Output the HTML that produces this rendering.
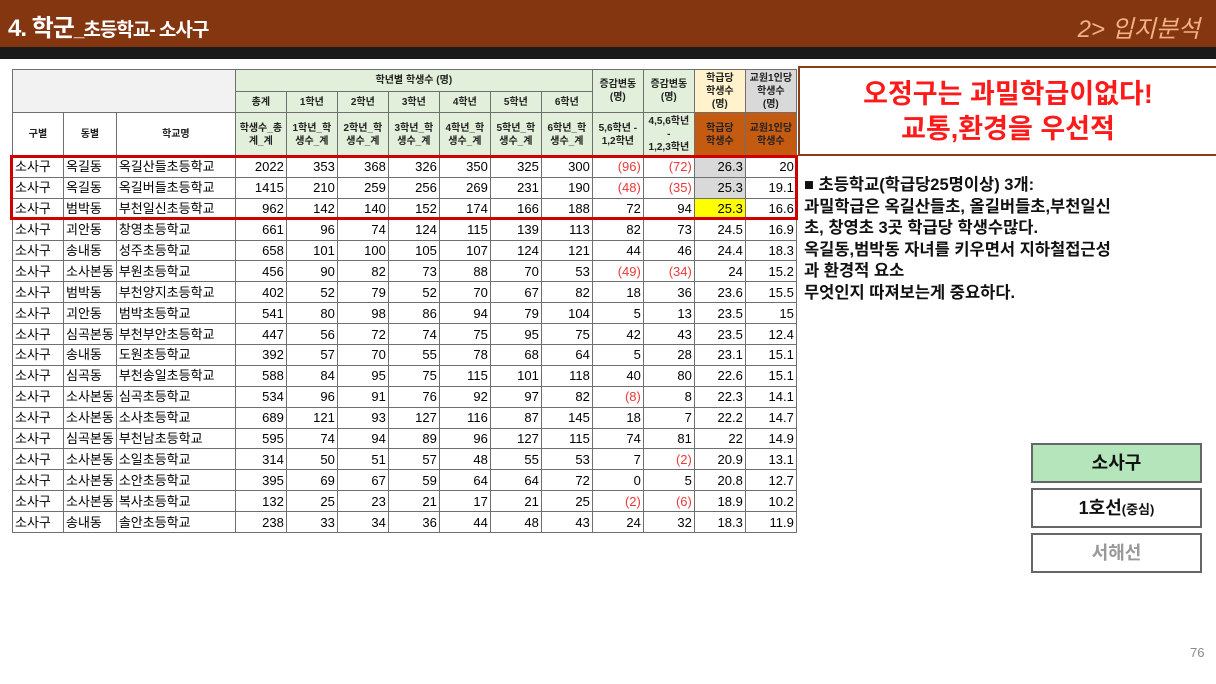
<!DOCTYPE html>
<html><head><meta charset="utf-8"><style>
*{margin:0;padding:0;box-sizing:border-box}
body{width:1216px;height:684px;background:#fff;position:relative;overflow:hidden;font-family:"Liberation Sans","Noto Sans CJK KR",sans-serif}
.hd{position:absolute;left:0;top:0;width:1216px;height:47px;background:#833610}
.bk{position:absolute;left:0;top:47px;width:1216px;height:12px;background:#1a1a1a}
.t1{position:absolute;left:8px;top:8px;color:#fff;font-weight:bold;font-size:24px;letter-spacing:-1px}
.t1 small{font-size:19px}
.t2{position:absolute;right:16px;top:9px;color:#f4b183;font-style:italic;font-size:24px}
table{position:absolute;left:12px;top:69px;border-collapse:collapse;table-layout:fixed;font-size:13px}
td{border:1px solid #6f6f6f;overflow:hidden;white-space:nowrap;padding:0 2px}
.h td{background:#e2efda;font-size:10px;font-weight:bold;text-align:center;line-height:13px;color:#222}
.h td.w{background:#fff}
td.n{text-align:right}
td.r{color:#e83a3a;text-align:right}
tr.d td{height:20.9px;line-height:19px}
.box{position:absolute;left:798px;top:66px;width:418px;height:90px;border:2px solid #8a3d17;border-right:none;text-align:center;color:#ff1a1a;font-weight:bold;font-size:27px;line-height:35px;padding-top:9px}
.txt{position:absolute;left:804px;top:175px;font-size:16.5px;font-weight:bold;line-height:21.5px;color:#111}
.red{position:absolute;left:10px;top:155px;width:788px;height:65px;border:3px solid #d00000}
.btn{position:absolute;left:1031px;width:171px;height:40px;border:2px solid #666;text-align:center;font-weight:bold;font-size:18px;line-height:36px}
.pg{position:absolute;left:1190px;top:645px;color:#888;font-size:13px}
</style></head><body>
<div class="hd"></div><div class="bk"></div>
<div class="t1">4. 학군<small>_초등학교- 소사구</small></div>
<div class="t2">2&gt; 입지분석</div>
<table>
<colgroup><col style="width:51px"><col style="width:52px"><col style="width:119px"><col style="width:51px"><col style="width:51px"><col style="width:51px"><col style="width:51px"><col style="width:51px"><col style="width:51px"><col style="width:51px"><col style="width:51px"><col style="width:51px"><col style="width:51px"><col style="width:51px"></colgroup>
<tr class="h" style="height:22px"><td class="w" colspan="3" rowspan="2" style="background:#f2f2f2"></td><td colspan="7">학년별 학생수 (명)</td><td rowspan="2">증감변동<br>(명)</td><td rowspan="2">증감변동<br>(명)</td><td rowspan="2" style="background:#fff2cc">학급당<br>학생수<br>(명)</td><td rowspan="2" style="background:#d9d9d9">교원1인당<br>학생수<br>(명)</td></tr>
<tr class="h" style="height:21px"><td>총계</td><td>1학년</td><td>2학년</td><td>3학년</td><td>4학년</td><td>5학년</td><td>6학년</td></tr>
<tr class="h" style="height:44px"><td class="w">구별</td><td class="w">동별</td><td class="w">학교명</td><td>학생수_총<br>계_계</td><td>1학년_학<br>생수_계</td><td>2학년_학<br>생수_계</td><td>3학년_학<br>생수_계</td><td>4학년_학<br>생수_계</td><td>5학년_학<br>생수_계</td><td>6학년_학<br>생수_계</td><td>5,6학년 -<br>1,2학년</td><td>4,5,6학년<br>-<br>1,2,3학년</td><td style="background:#c55a11;color:#222">학급당<br>학생수</td><td style="background:#c55a11;color:#222">교원1인당<br>학생수</td></tr>
<tr class="d"><td>소사구</td><td>옥길동</td><td>옥길산들초등학교</td><td class="n">2022</td><td class="n">353</td><td class="n">368</td><td class="n">326</td><td class="n">350</td><td class="n">325</td><td class="n">300</td><td class="r">(96)</td><td class="r">(72)</td><td class="n" style="background:#d9d9d9">26.3</td><td class="n">20</td></tr>
<tr class="d"><td>소사구</td><td>옥길동</td><td>옥길버들초등학교</td><td class="n">1415</td><td class="n">210</td><td class="n">259</td><td class="n">256</td><td class="n">269</td><td class="n">231</td><td class="n">190</td><td class="r">(48)</td><td class="r">(35)</td><td class="n" style="background:#d9d9d9">25.3</td><td class="n">19.1</td></tr>
<tr class="d"><td>소사구</td><td>범박동</td><td>부천일신초등학교</td><td class="n">962</td><td class="n">142</td><td class="n">140</td><td class="n">152</td><td class="n">174</td><td class="n">166</td><td class="n">188</td><td class="n">72</td><td class="n">94</td><td class="n" style="background:#ffff00">25.3</td><td class="n">16.6</td></tr>
<tr class="d"><td>소사구</td><td>괴안동</td><td>창영초등학교</td><td class="n">661</td><td class="n">96</td><td class="n">74</td><td class="n">124</td><td class="n">115</td><td class="n">139</td><td class="n">113</td><td class="n">82</td><td class="n">73</td><td class="n">24.5</td><td class="n">16.9</td></tr>
<tr class="d"><td>소사구</td><td>송내동</td><td>성주초등학교</td><td class="n">658</td><td class="n">101</td><td class="n">100</td><td class="n">105</td><td class="n">107</td><td class="n">124</td><td class="n">121</td><td class="n">44</td><td class="n">46</td><td class="n">24.4</td><td class="n">18.3</td></tr>
<tr class="d"><td>소사구</td><td>소사본동</td><td>부원초등학교</td><td class="n">456</td><td class="n">90</td><td class="n">82</td><td class="n">73</td><td class="n">88</td><td class="n">70</td><td class="n">53</td><td class="r">(49)</td><td class="r">(34)</td><td class="n">24</td><td class="n">15.2</td></tr>
<tr class="d"><td>소사구</td><td>범박동</td><td>부천양지초등학교</td><td class="n">402</td><td class="n">52</td><td class="n">79</td><td class="n">52</td><td class="n">70</td><td class="n">67</td><td class="n">82</td><td class="n">18</td><td class="n">36</td><td class="n">23.6</td><td class="n">15.5</td></tr>
<tr class="d"><td>소사구</td><td>괴안동</td><td>범박초등학교</td><td class="n">541</td><td class="n">80</td><td class="n">98</td><td class="n">86</td><td class="n">94</td><td class="n">79</td><td class="n">104</td><td class="n">5</td><td class="n">13</td><td class="n">23.5</td><td class="n">15</td></tr>
<tr class="d"><td>소사구</td><td>심곡본동</td><td>부천부안초등학교</td><td class="n">447</td><td class="n">56</td><td class="n">72</td><td class="n">74</td><td class="n">75</td><td class="n">95</td><td class="n">75</td><td class="n">42</td><td class="n">43</td><td class="n">23.5</td><td class="n">12.4</td></tr>
<tr class="d"><td>소사구</td><td>송내동</td><td>도원초등학교</td><td class="n">392</td><td class="n">57</td><td class="n">70</td><td class="n">55</td><td class="n">78</td><td class="n">68</td><td class="n">64</td><td class="n">5</td><td class="n">28</td><td class="n">23.1</td><td class="n">15.1</td></tr>
<tr class="d"><td>소사구</td><td>심곡동</td><td>부천송일초등학교</td><td class="n">588</td><td class="n">84</td><td class="n">95</td><td class="n">75</td><td class="n">115</td><td class="n">101</td><td class="n">118</td><td class="n">40</td><td class="n">80</td><td class="n">22.6</td><td class="n">15.1</td></tr>
<tr class="d"><td>소사구</td><td>소사본동</td><td>심곡초등학교</td><td class="n">534</td><td class="n">96</td><td class="n">91</td><td class="n">76</td><td class="n">92</td><td class="n">97</td><td class="n">82</td><td class="r">(8)</td><td class="n">8</td><td class="n">22.3</td><td class="n">14.1</td></tr>
<tr class="d"><td>소사구</td><td>소사본동</td><td>소사초등학교</td><td class="n">689</td><td class="n">121</td><td class="n">93</td><td class="n">127</td><td class="n">116</td><td class="n">87</td><td class="n">145</td><td class="n">18</td><td class="n">7</td><td class="n">22.2</td><td class="n">14.7</td></tr>
<tr class="d"><td>소사구</td><td>심곡본동</td><td>부천남초등학교</td><td class="n">595</td><td class="n">74</td><td class="n">94</td><td class="n">89</td><td class="n">96</td><td class="n">127</td><td class="n">115</td><td class="n">74</td><td class="n">81</td><td class="n">22</td><td class="n">14.9</td></tr>
<tr class="d"><td>소사구</td><td>소사본동</td><td>소일초등학교</td><td class="n">314</td><td class="n">50</td><td class="n">51</td><td class="n">57</td><td class="n">48</td><td class="n">55</td><td class="n">53</td><td class="n">7</td><td class="r">(2)</td><td class="n">20.9</td><td class="n">13.1</td></tr>
<tr class="d"><td>소사구</td><td>소사본동</td><td>소안초등학교</td><td class="n">395</td><td class="n">69</td><td class="n">67</td><td class="n">59</td><td class="n">64</td><td class="n">64</td><td class="n">72</td><td class="n">0</td><td class="n">5</td><td class="n">20.8</td><td class="n">12.7</td></tr>
<tr class="d"><td>소사구</td><td>소사본동</td><td>복사초등학교</td><td class="n">132</td><td class="n">25</td><td class="n">23</td><td class="n">21</td><td class="n">17</td><td class="n">21</td><td class="n">25</td><td class="r">(2)</td><td class="r">(6)</td><td class="n">18.9</td><td class="n">10.2</td></tr>
<tr class="d"><td>소사구</td><td>송내동</td><td>솔안초등학교</td><td class="n">238</td><td class="n">33</td><td class="n">34</td><td class="n">36</td><td class="n">44</td><td class="n">48</td><td class="n">43</td><td class="n">24</td><td class="n">32</td><td class="n">18.3</td><td class="n">11.9</td></tr>
</table>
<div class="red"></div>
<div class="box">오정구는 과밀학급이없다!<br>교통,환경을 우선적</div>
<div class="txt">■ 초등학교(학급당25명이상) 3개:<br>과밀학급은 옥길산들초, 올길버들초,부천일신<br>초, 창영초 3곳 학급당 학생수많다.<br>옥길동,범박동 자녀를 키우면서 지하철접근성<br>과 환경적 요소<br>무엇인지 따져보는게 중요하다.</div>
<div class="btn" style="top:443px;background:#b4e5bb;color:#111">소사구</div>
<div class="btn" style="top:488px;background:#fff;color:#111">1호선<span style="font-size:13px">(중심)</span></div>
<div class="btn" style="top:533px;background:#fff;color:#999">서해선</div>
<div class="pg">76</div>
</body></html>
